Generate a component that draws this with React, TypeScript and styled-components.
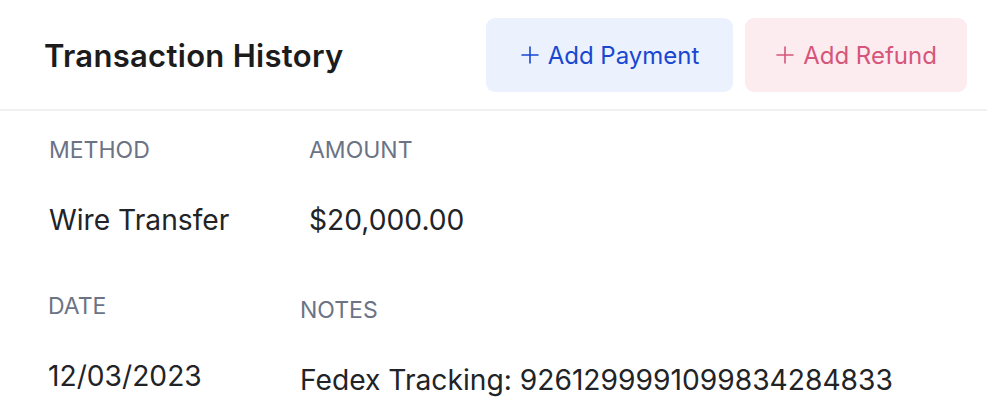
import React from 'react';
import styled, { createGlobalStyle } from 'styled-components';

const GlobalStyle = createGlobalStyle`
  html, body {
    margin: 0;
    padding: 0;
    background: #ffffff;
  }
  body {
    font-family: Inter, "Noto Sans", sans-serif;
    -webkit-font-smoothing: antialiased;
  }
`;

type Tone = 'blue' | 'red';

const tones: Record<Tone, { bg: string; fg: string }> = {
  blue: { bg: '#ebf2fe', fg: '#1947d1' },
  red: { bg: '#fdecef', fg: '#d6557a' },
};

const Panel = styled.div`
  width: 987px;
  height: 420px;
  overflow: hidden;
  background: #fff;
`;

const Header = styled.header`
  display: flex;
  align-items: center;
  justify-content: space-between;
  padding: 18px 20px 17px 44px;
  border-bottom: 2px solid #f0f0f0;
`;

const Title = styled.h2`
  margin: 0;
  font-size: 31px;
  font-weight: 600;
  color: #1c1c1c;
  letter-spacing: 0.3px;
`;

const Actions = styled.div`
  display: flex;
  gap: 12px;
`;

const ActionButton = styled.button<{ $tone: Tone; $width: number }>`
  display: flex;
  align-items: center;
  justify-content: center;
  gap: 8px;
  width: ${(p) => p.$width}px;
  height: 74px;
  border: none;
  border-radius: 9px;
  background: ${(p) => tones[p.$tone].bg};
  color: ${(p) => tones[p.$tone].fg};
  font-family: inherit;
  font-size: 24px;
  font-weight: 400;
  cursor: pointer;
`;

const Plus = styled.svg`
  width: 20px;
  height: 20px;
  flex: none;
`;

const Body = styled.div`
  padding: 0 0 0 48px;
`;

const Row = styled.div<{ $col: number; $top: number }>`
  display: grid;
  grid-template-columns: ${(p) => p.$col}px 1fr;
  padding-top: ${(p) => p.$top}px;
`;

const Field = styled.div<{ $shift?: number }>`
  display: flex;
  flex-direction: column;
  gap: 38px;
  padding-left: ${(p) => p.$shift ?? 0}px;
`;

const Label = styled.div<{ $drop?: number }>`
  font-size: 23px;
  color: #6b7385;
  text-transform: uppercase;
  line-height: 30px;
  margin-top: ${(p) => p.$drop ?? 0}px;
`;

const Value = styled.div`
  font-size: 28.2px;
  color: #222326;
  line-height: 34px;
`;

const PlusIcon = () => (
  <Plus viewBox="0 0 20 20" fill="none" stroke="currentColor" strokeWidth="1.6" strokeLinecap="round">
    <path d="M10 2v16M2 10h16" />
  </Plus>
);

export default function App() {
  return (
    <Panel>
      <GlobalStyle />
      <Header>
        <Title>Transaction History</Title>
        <Actions>
          <ActionButton $tone="blue" $width={247}>
            <PlusIcon />
            Add Payment
          </ActionButton>
          <ActionButton $tone="red" $width={222}>
            <PlusIcon />
            Add Refund
          </ActionButton>
        </Actions>
      </Header>
      <Body>
        <Row $col={260} $top={24}>
          <Field $shift={1}>
            <Label>Method</Label>
            <Value>Wire Transfer</Value>
          </Field>
          <Field $shift={1}>
            <Label>Amount</Label>
            <Value>$20,000.00</Value>
          </Field>
        </Row>
        <Row $col={252} $top={54}>
          <Field>
            <Label>Date</Label>
            <Value>12/03/2023</Value>
          </Field>
          <Field>
            <Label $drop={4}>Notes</Label>
            <Value>Fedex Tracking: 9261299991099834284833</Value>
          </Field>
        </Row>
      </Body>
    </Panel>
  );
}
